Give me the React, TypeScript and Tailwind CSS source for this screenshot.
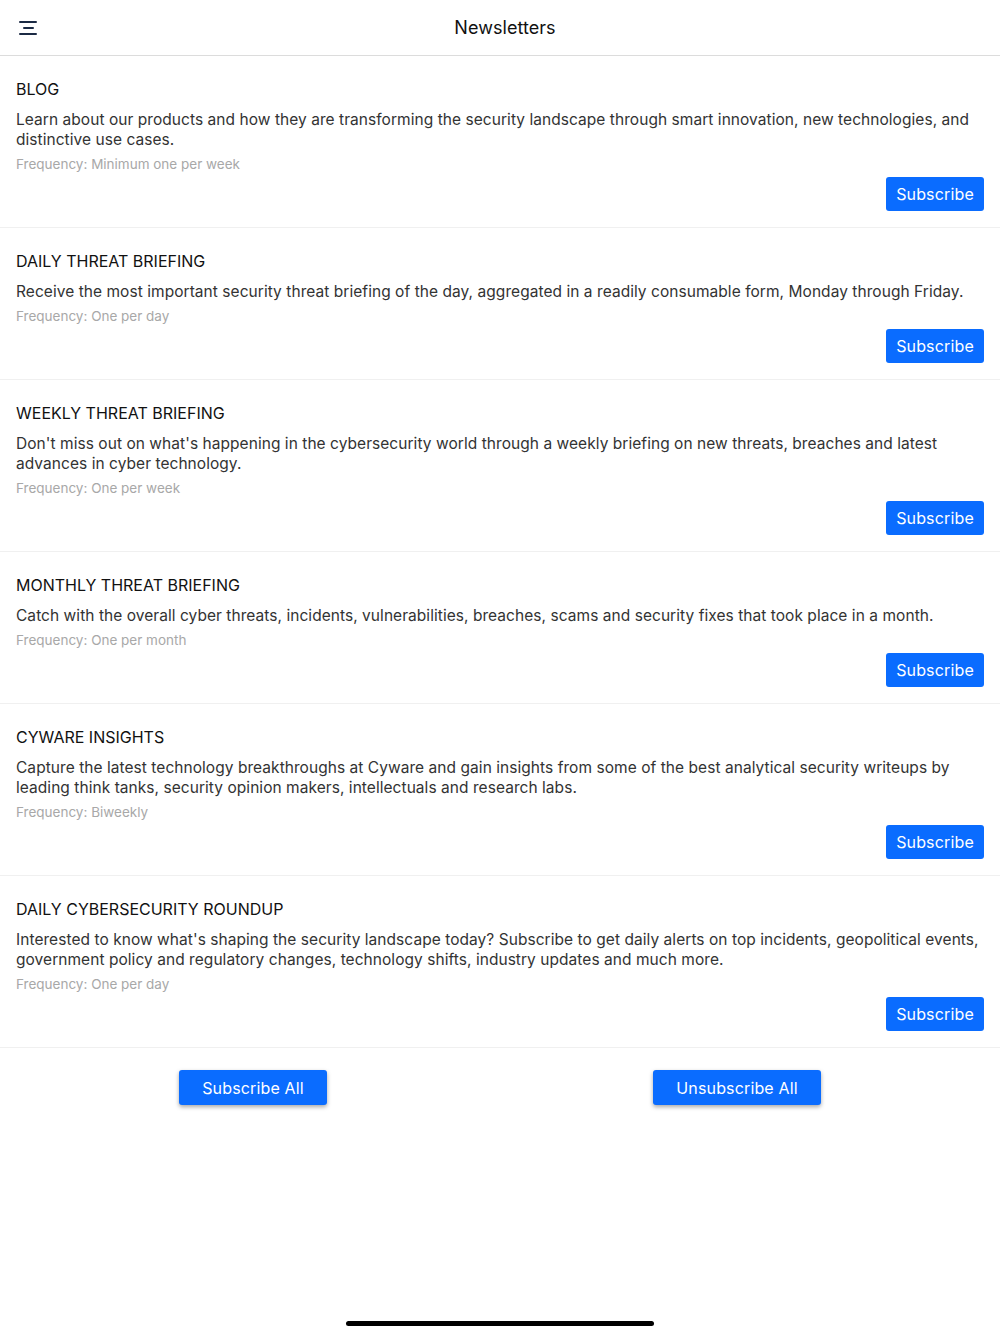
const newsletters = [
  {
    title: 'BLOG',
    desc: 'Learn about our products and how they are transforming the security landscape through smart innovation, new technologies, and distinctive use cases.',
    freq: 'Minimum one per week',
  },
  {
    title: 'DAILY THREAT BRIEFING',
    desc: 'Receive the most important security threat briefing of the day, aggregated in a readily consumable form, Monday through Friday.',
    freq: 'One per day',
  },
  {
    title: 'WEEKLY THREAT BRIEFING',
    desc: "Don't miss out on what's happening in the cybersecurity world through a weekly briefing on new threats, breaches and latest advances in cyber technology.",
    freq: 'One per week',
  },
  {
    title: 'MONTHLY THREAT BRIEFING',
    desc: 'Catch with the overall cyber threats, incidents, vulnerabilities, breaches, scams and security fixes that took place in a month.',
    freq: 'One per month',
  },
  {
    title: 'CYWARE INSIGHTS',
    desc: 'Capture the latest technology breakthroughs at Cyware and gain insights from some of the best analytical security writeups by leading think tanks, security opinion makers, intellectuals and research labs.',
    freq: 'Biweekly',
  },
  {
    title: 'DAILY CYBERSECURITY ROUNDUP',
    desc: "Interested to know what's shaping the security landscape today? Subscribe to get daily alerts on top incidents, geopolitical events, government policy and regulatory changes, technology shifts, industry updates and much more.",
    freq: 'One per day',
  },
]

const App = () => {
  return (
    <div className="w-[1000px] h-[1334px] bg-white flex flex-col font-['Inter',sans-serif] text-[#111]">
      {/* Header */}
      <div className="h-[56px] border-b border-[#dcdcdc] flex items-center relative shrink-0">
        <button className="ml-[19px] w-[18px] h-[14px] flex flex-col justify-between items-center">
          <span className="block w-[18px] h-[2px] bg-[#1b2a44] rounded-full" />
          <span className="block w-[11px] h-[2px] bg-[#1b2a44] rounded-full" />
          <span className="block w-[18px] h-[2px] bg-[#1b2a44] rounded-full" />
        </button>
        <h1 className="absolute left-0 right-0 text-center text-[18px] tracking-[0.05px] pl-[10px] pointer-events-none">Newsletters</h1>
      </div>

      {/* List */}
      <div className="flex flex-col">
        {newsletters.map((n) => (
          <div key={n.title} className="border-b border-[#f0f0f0] px-4 pt-[23px] pb-4">
            <h2 className="text-[16px] leading-[20px] text-[#111]">{n.title}</h2>
            <p className="mt-[11px] text-[15.5px] leading-[20px] tracking-[0.05px] text-[#333]">{n.desc}</p>
            <p className="mt-1 text-[13.5px] leading-[20px] text-[#a8a8a8]">Frequency: {n.freq}</p>
            <div className="flex justify-end mt-[3px]">
              <button className="w-[98px] h-[34px] rounded-[3px] bg-[#0a6cff] text-white text-[16px] tracking-[0.15px]">Subscribe</button>
            </div>
          </div>
        ))}
      </div>

      {/* Bulk actions */}
      <div className="flex pl-[179px] gap-[326px] mt-[22px]">
        <button className="w-[148px] h-[35px] rounded-[3px] bg-[#0a6cff] text-white text-[16px] tracking-[0.15px] shadow-[0_2px_4px_rgba(0,0,0,0.35)]">Subscribe All</button>
        <button className="w-[168px] h-[35px] rounded-[3px] bg-[#0a6cff] text-white text-[16px] tracking-[0.15px] shadow-[0_2px_4px_rgba(0,0,0,0.35)]">Unsubscribe All</button>
      </div>

      <div className="flex-1" />
      <div className="flex justify-center pb-[8px]">
        <div className="w-[308px] h-[5px] rounded-full bg-black" />
      </div>
    </div>
  )
}

export default App
